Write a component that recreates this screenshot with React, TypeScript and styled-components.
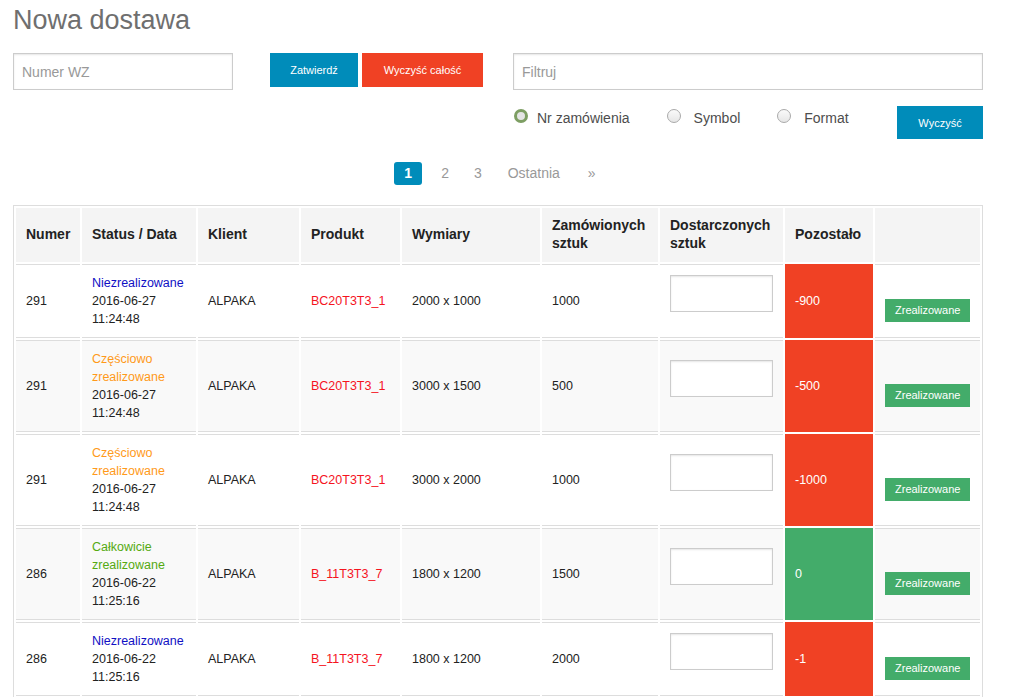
import React from "react";
import styled, { createGlobalStyle, css } from "styled-components";

const GlobalStyle = createGlobalStyle`
  html {
    scrollbar-width: none;
  }
  html::-webkit-scrollbar {
    display: none;
  }
  *, *::before, *::after {
    box-sizing: border-box;
  }
  body {
    margin: 0;
    background: #fff;
    color: #222;
    font-family: "Liberation Sans", Arial, sans-serif;
  }
`

const Page = styled.div`
  width: 970px;
  margin-left: 13px;
`

const PageTitle = styled.h1`
  margin: 1px 0 14px;
  font-size: 27px;
  line-height: 38px;
  font-weight: normal;
  color: #6f6f6f;
`

const Toolbar = styled.div`
  display: grid;
  grid-template-columns: 470px 470px;
  column-gap: 30px;
`

const LeftPane = styled.div`
  display: grid;
  grid-template-columns: 220px 1fr;
  column-gap: 30px;
  align-items: start;
`

const RightPane = styled.div`
  display: flex;
  flex-direction: column;
  gap: 16px;
`

const TextInput = styled.input`
  display: block;
  width: 100%;
  height: 37px;
  padding: 8px;
  border: 1px solid #ccc;
  background: #fff;
  box-shadow: inset 0 1px 2px rgba(0, 0, 0, 0.1);
  font-family: inherit;
  font-size: 14px;
  color: #222;
  outline: none;

  &::placeholder {
    color: #999;
  }
`

const ButtonGroup = styled.div`
  display: flex;
  justify-content: flex-end;
  gap: 4px;
`

const Button = styled.button<{ $tone: "primary" | "alert"; $width: number }>`
  width: ${(p) => p.$width}px;
  height: 34px;
  padding: 0;
  border: none;
  font-family: inherit;
  font-size: 11px;
  color: #fff;
  cursor: pointer;
  background: ${(p) => (p.$tone === "primary" ? "#008cba" : "#f04124")};
`

const FilterRow = styled.div`
  display: flex;
  align-items: flex-start;
`

const RadioGroup = styled.div`
  display: flex;
  gap: 36px;
  padding-top: 2px;
`

const RadioOption = styled.label`
  display: flex;
  align-items: center;
  gap: 13px;
  font-size: 14px;
  line-height: 20px;
  color: #4d4d4d;

  &:first-child {
    gap: 9px;
  }
`

const Radio = styled.input`
  appearance: none;
  width: 14px;
  height: 14px;
  margin: -4px 0 0 1px;
  border-radius: 50%;
  border: 1px solid #aaa;
  background: linear-gradient(#fafafa, #e6e6e6);

  &:checked {
    border: 3px solid #7d9e63;
    background: #e4e4e4;
  }
`

const ClearButton = styled(Button)`
  height: 33px;
  margin-left: auto;
`

const Pagination = styled.ul`
  display: flex;
  justify-content: center;
  list-style: none;
  margin: 23px 0 20px;
  padding: 0 0 0 4px;
`

const PageItem = styled.li<{ $current?: boolean; $space?: number }>`
  margin-left: ${(p) => p.$space ?? 0}px;
  padding: 1px 10px;
  font-size: 14px;
  line-height: 21px;
  border-radius: 3px;
  color: #999;

  ${(p) =>
    p.$current &&
    css`
      background: #008cba;
      color: #fff;
      font-weight: bold;
    `}
`

const Table = styled.table`
  width: 970px;
  table-layout: fixed;
  border-collapse: separate;
  border-spacing: 2px;
  border: 1px solid #ddd;
  background: #fff;
`

const HeadCell = styled.th<{ $w: number }>`
  width: ${(p) => p.$w}px;
  padding: 8px 10px 10px;
  background: #f4f4f4;
  font-size: 14px;
  line-height: 18px;
  font-weight: bold;
  text-align: left;
  vertical-align: middle;
  color: #222;
`

const Row = styled.tr<{ $even: boolean }>`
  background: ${(p) => (p.$even ? "#f9f9f9" : "#fff")};
`

const Cell = styled.td`
  padding: 9px 10px;
  border-top: 1px solid #ddd;
  border-bottom: 1px solid #ddd;
  font-size: 12.5px;
  line-height: 18px;
  vertical-align: middle;
  color: #222;
`

const RemainingCell = styled(Cell)<{ $ok: boolean }>`
  border-color: transparent;
  color: #fff;
  background: ${(p) => (p.$ok ? "#43ac6a" : "#f04124")};
`

const statusColors = {
  none: "#1010c4",
  partial: "#ff9a1a",
  full: "#55aa11",
}

const StatusText = styled.div<{ $state: keyof typeof statusColors }>`
  color: ${(p) => statusColors[p.$state]};
`

const Line = styled.div``

const Product = styled.span`
  color: #f5141e;
`

const QtyInput = styled(TextInput)`
  height: 37px;
  margin-bottom: 15px;
`

const DoneButton = styled.button`
  display: block;
  margin-top: 19px;
  padding: 5px 10px;
  border: none;
  background: #43ac6a;
  color: #fff;
  font-family: inherit;
  font-size: 11px;
  line-height: 13px;
  cursor: pointer;
`

const columns = [
  { label: "Numer", w: 64 },
  { label: "Status / Data", w: 114 },
  { label: "Klient", w: 101 },
  { label: "Produkt", w: 99 },
  { label: "Wymiary", w: 138 },
  { label: "Zamówionych sztuk", w: 116 },
  { label: "Dostarczonych sztuk", w: 123 },
  { label: "Pozostało", w: 88 },
  { label: "", w: 105 },
]

const statusLabels = {
  none: "Niezrealizowane",
  partial: "Częściowo zrealizowane",
  full: "Całkowicie zrealizowane",
}

const pages = [
  { label: "1", space: 0, current: true },
  { label: "2", space: 9 },
  { label: "3", space: 5 },
  { label: "Ostatnia", space: 6 },
  { label: "»", space: 8 },
]

interface Delivery {
  id: number
  state: keyof typeof statusColors
  date: string
  time: string
  client: string
  product: string
  size: string
  ordered: number
  left: number
}

const rows: Delivery[] = [
  { id: 291, state: "none", date: "2016-06-27", time: "11:24:48", client: "ALPAKA", product: "BC20T3T3_1", size: "2000 x 1000", ordered: 1000, left: -900 },
  { id: 291, state: "partial", date: "2016-06-27", time: "11:24:48", client: "ALPAKA", product: "BC20T3T3_1", size: "3000 x 1500", ordered: 500, left: -500 },
  { id: 291, state: "partial", date: "2016-06-27", time: "11:24:48", client: "ALPAKA", product: "BC20T3T3_1", size: "3000 x 2000", ordered: 1000, left: -1000 },
  { id: 286, state: "full", date: "2016-06-22", time: "11:25:16", client: "ALPAKA", product: "B_11T3T3_7", size: "1800 x 1200", ordered: 1500, left: 0 },
  { id: 286, state: "none", date: "2016-06-22", time: "11:25:16", client: "ALPAKA", product: "B_11T3T3_7", size: "1800 x 1200", ordered: 2000, left: -1 },
]

const App: React.FC = () => {
  return (
    <Page>
      <GlobalStyle />
      <PageTitle>Nowa dostawa</PageTitle>

      <Toolbar>
        <LeftPane>
          <TextInput placeholder="Numer WZ" />
          <ButtonGroup>
            <Button $tone="primary" $width={88}>Zatwierdź</Button>
            <Button $tone="alert" $width={121}>Wyczyść całość</Button>
          </ButtonGroup>
        </LeftPane>
        <RightPane>
          <TextInput placeholder="Filtruj" />
          <FilterRow>
            <RadioGroup>
              <RadioOption>
                <Radio type="radio" name="filter" defaultChecked />
                Nr zamówienia
              </RadioOption>
              <RadioOption>
                <Radio type="radio" name="filter" />
                Symbol
              </RadioOption>
              <RadioOption>
                <Radio type="radio" name="filter" />
                Format
              </RadioOption>
            </RadioGroup>
            <ClearButton $tone="primary" $width={86}>Wyczyść</ClearButton>
          </FilterRow>
        </RightPane>
      </Toolbar>

      <Pagination>
        {pages.map((page) => (
          <PageItem key={page.label} $current={page.current} $space={page.space}>
            {page.label}
          </PageItem>
        ))}
      </Pagination>

      <Table>
        <thead>
          <tr>
            {columns.map((col, i) => (
              <HeadCell key={i} $w={col.w}>{col.label}</HeadCell>
            ))}
          </tr>
        </thead>
        <tbody>
          {rows.map((row, i) => (
            <Row key={i} $even={i % 2 === 1}>
              <Cell>{row.id}</Cell>
              <Cell>
                <StatusText $state={row.state}>{statusLabels[row.state]}</StatusText>
                <Line>{row.date}</Line>
                <Line>{row.time}</Line>
              </Cell>
              <Cell>{row.client}</Cell>
              <Cell>
                <Product>{row.product}</Product>
              </Cell>
              <Cell>{row.size}</Cell>
              <Cell>{row.ordered}</Cell>
              <Cell>
                <QtyInput />
              </Cell>
              <RemainingCell $ok={row.left === 0}>{row.left}</RemainingCell>
              <Cell>
                <DoneButton>Zrealizowane</DoneButton>
              </Cell>
            </Row>
          ))}
        </tbody>
      </Table>
    </Page>
  );
}

export default App;
